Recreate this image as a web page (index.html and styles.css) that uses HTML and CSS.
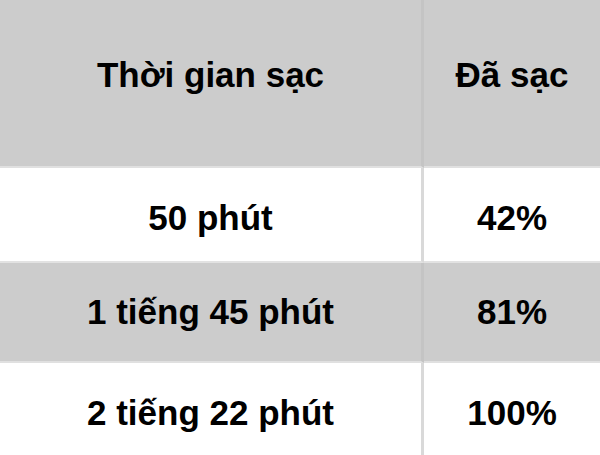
FILE: index.html
```html
<!DOCTYPE html>
<html lang="vi">
<head>
<meta charset="utf-8">
<link rel="stylesheet" href="styles.css">
</head>
<body>
<table class="charge-table">
  <thead>
    <tr class="row-head">
      <th class="col-time">Thời gian sạc</th>
      <th class="col-pct">Đã sạc</th>
    </tr>
  </thead>
  <tbody>
    <tr class="row-a">
      <td class="col-time">50 phút</td>
      <td class="col-pct">42%</td>
    </tr>
    <tr class="row-b">
      <td class="col-time">1 tiếng 45 phút</td>
      <td class="col-pct">81%</td>
    </tr>
    <tr class="row-c">
      <td class="col-time">2 tiếng 22 phút</td>
      <td class="col-pct">100%</td>
    </tr>
  </tbody>
</table>
</body>
</html>
```

FILE: styles.css
```css
html, body {
  margin: 0;
  padding: 0;
  background: #ffffff;
}

.charge-table {
  width: 600px;
  border-collapse: separate;
  border-spacing: 0;
  table-layout: fixed;
  font-family: "Liberation Sans", Arial, sans-serif;
  font-weight: bold;
  font-size: 35px;
  line-height: 40px;
  color: #000000;
}

.charge-table th,
.charge-table td {
  text-align: center;
  vertical-align: top;
  padding: 0;
  font-weight: bold;
  white-space: nowrap;
  box-sizing: border-box;
}

.col-time {
  width: 424px;
  border-right: 3px solid #c4c4c4;
}

.row-a .col-time,
.row-c .col-time {
  border-right-color: #d9d9d9;
}

.row-head th {
  background: #cccccc;
  height: 168px;
  padding-top: 55px;
  border-bottom: 2px solid #e0e0e0;
}

.row-a td {
  background: #ffffff;
  height: 95px;
  padding-top: 30px;
  border-bottom: 2px solid #e2e2e2;
}

.row-b td {
  background: #cccccc;
  height: 100px;
  padding-top: 29px;
  border-bottom: 2px solid #e0e0e0;
}

.row-c td {
  background: #ffffff;
  height: 92px;
  padding-top: 30px;
}
```
